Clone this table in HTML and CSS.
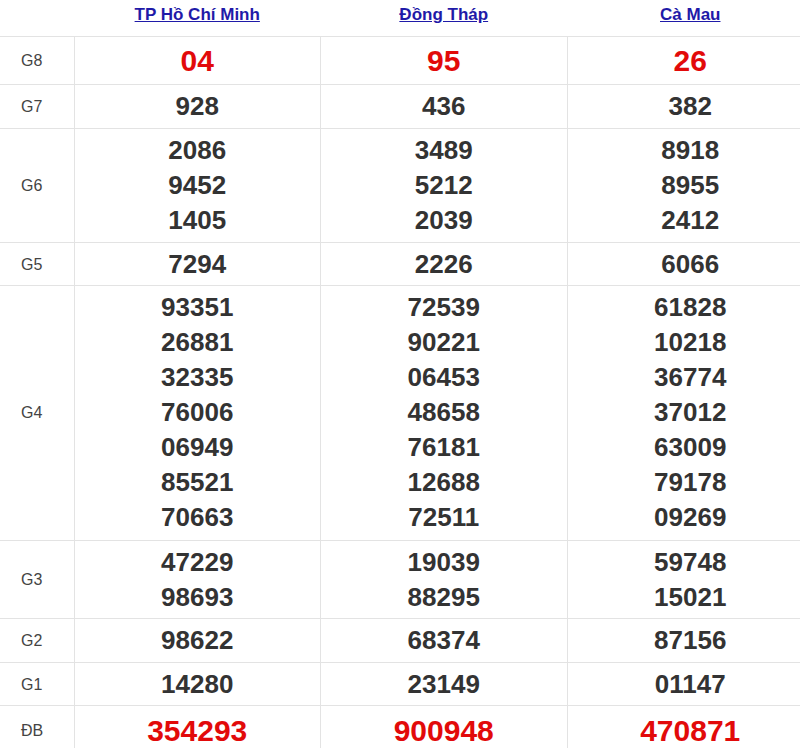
FILE: index.html
```html
<!DOCTYPE html>
<html lang="vi">
<head>
<meta charset="utf-8">
<link rel="stylesheet" href="styles.css">
</head>
<body>
<table class="kq">
  <thead>
    <tr>
      <th class="lbl-h"></th>
      <th><a href="#">TP Hồ Chí Minh</a></th>
      <th><a href="#">Đồng Tháp</a></th>
      <th><a href="#">Cà Mau</a></th>
    </tr>
  </thead>
  <tbody>
    <tr class="r8">
      <td class="lbl">G8</td>
      <td><div class="n big">04</div></td>
      <td><div class="n big">95</div></td>
      <td><div class="n big">26</div></td>
    </tr>
    <tr>
      <td class="lbl">G7</td>
      <td><div class="n">928</div></td>
      <td><div class="n">436</div></td>
      <td><div class="n">382</div></td>
    </tr>
    <tr>
      <td class="lbl">G6</td>
      <td><div class="n">2086</div><div class="n">9452</div><div class="n">1405</div></td>
      <td><div class="n">3489</div><div class="n">5212</div><div class="n">2039</div></td>
      <td><div class="n">8918</div><div class="n">8955</div><div class="n">2412</div></td>
    </tr>
    <tr class="tight">
      <td class="lbl">G5</td>
      <td><div class="n">7294</div></td>
      <td><div class="n">2226</div></td>
      <td><div class="n">6066</div></td>
    </tr>
    <tr class="loose">
      <td class="lbl">G4</td>
      <td><div class="n">93351</div><div class="n">26881</div><div class="n">32335</div><div class="n">76006</div><div class="n">06949</div><div class="n">85521</div><div class="n">70663</div></td>
      <td><div class="n">72539</div><div class="n">90221</div><div class="n">06453</div><div class="n">48658</div><div class="n">76181</div><div class="n">12688</div><div class="n">72511</div></td>
      <td><div class="n">61828</div><div class="n">10218</div><div class="n">36774</div><div class="n">37012</div><div class="n">63009</div><div class="n">79178</div><div class="n">09269</div></td>
    </tr>
    <tr class="tight">
      <td class="lbl">G3</td>
      <td><div class="n">47229</div><div class="n">98693</div></td>
      <td><div class="n">19039</div><div class="n">88295</div></td>
      <td><div class="n">59748</div><div class="n">15021</div></td>
    </tr>
    <tr>
      <td class="lbl">G2</td>
      <td><div class="n">98622</div></td>
      <td><div class="n">68374</div></td>
      <td><div class="n">87156</div></td>
    </tr>
    <tr class="tight">
      <td class="lbl">G1</td>
      <td><div class="n">14280</div></td>
      <td><div class="n">23149</div></td>
      <td><div class="n">01147</div></td>
    </tr>
    <tr class="rdb">
      <td class="lbl">ĐB</td>
      <td><div class="n big">354293</div></td>
      <td><div class="n big">900948</div></td>
      <td><div class="n big">470871</div></td>
    </tr>
  </tbody>
</table>
</body>
</html>
```

FILE: styles.css
```css
html, body {
  margin: 0;
  padding: 0;
  background: #fff;
  overflow: hidden;
}
body {
  font-family: "Liberation Sans", Arial, sans-serif;
  color: #333;
}
.kq {
  border-collapse: collapse;
  width: 814px;
  table-layout: fixed;
}
.kq th {
  padding: 5px 0 11px 0;
  line-height: 20px;
  text-align: center;
  vertical-align: top;
  font-weight: bold;
  font-size: 17px;
  border-bottom: 1px solid #e3e3e3;
}
.kq th.lbl-h {
  width: 74px;
}
.kq th a {
  color: #1f1aa8;
  text-decoration: underline;
}
.kq td {
  border: 1px solid #e3e3e3;
  padding: 4px 0;
  text-align: center;
  vertical-align: middle;
}
.kq tr.tight td {
  padding-bottom: 3px;
}
.kq tr.loose td {
  padding-bottom: 5px;
}
.kq td.lbl {
  border-left: none;
  text-align: left;
  padding-left: 21px;
  font-size: 16px;
  color: #444;
}
.n {
  font-size: 26px;
  font-weight: bold;
  line-height: 35px;
  color: #333;
}
.n.big {
  font-size: 30px;
  color: #e20a0a;
  line-height: 39px;
}
.rdb td {
  padding-top: 5px;
}
```
